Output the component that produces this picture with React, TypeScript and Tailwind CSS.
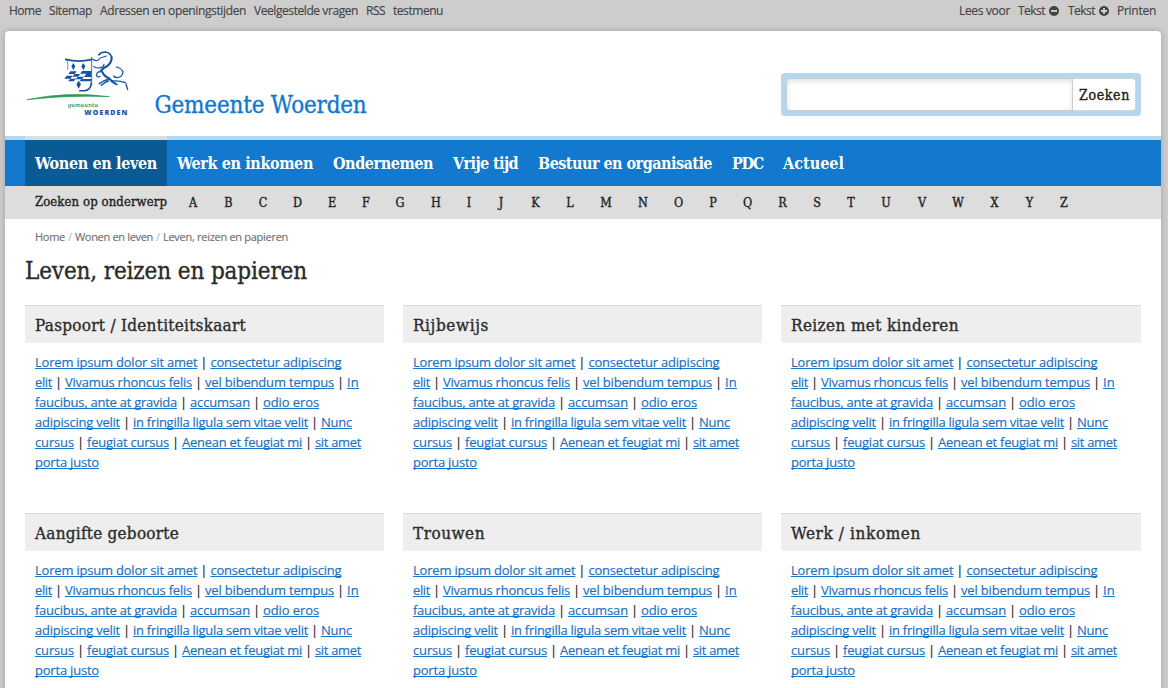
import { useLayoutEffect, useRef, useState } from "react";

const SLAB = "font-['DejaVu_Serif_Condensed','DejaVu_Serif',serif] [font-stretch:condensed] [-webkit-text-stroke:0.35px_currentColor]";
const SANS = "font-['Open_Sans','Noto_Sans',sans-serif] [-webkit-text-stroke:0.15px_currentColor]";

/** Text whose letter spacing is adjusted so that it fills a set width. */
function Fit({ text, w, className = "" }: { text: string; w: number; className?: string }) {
  const ref = useRef<HTMLSpanElement>(null);
  const [spacing, setSpacing] = useState(0);
  useLayoutEffect(() => {
    const natural = ref.current!.getBoundingClientRect().width;
    setSpacing((s) => s + (w - natural) / text.length);
  }, [text, w]);
  return (
    <span className="block shrink-0 whitespace-nowrap" style={{ width: w }}>
      <span ref={ref} className={className} style={{ letterSpacing: spacing }}>
        {text}
      </span>
    </span>
  );
}

const topLeft: [string, number][] = [
  ["Home", 32],
  ["Sitemap", 43],
  ["Adressen en openingstijden", 146],
  ["Veelgestelde vragen", 104],
  ["RSS", 19],
  ["testmenu", 50],
];

const nav: [string, number][] = [
  ["Wonen en leven", 122],
  ["Werk en inkomen", 136],
  ["Ondernemen", 100],
  ["Vrije tijd", 65],
  ["Bestuur en organisatie", 174],
  ["PDC", 31],
  ["Actueel", 61],
];

const letters: [string, number][] = [
  ["A", 193], ["B", 228.5], ["C", 263], ["D", 297.5], ["E", 332], ["F", 366], ["G", 400],
  ["H", 436], ["I", 469], ["J", 501], ["K", 535.5], ["L", 570], ["M", 606], ["N", 643],
  ["O", 678.5], ["P", 713], ["Q", 747.5], ["R", 782.5], ["S", 817], ["T", 851], ["U", 886],
  ["V", 922], ["W", 958], ["X", 994.5], ["Y", 1029.5], ["Z", 1064],
];

const lines: [string, number][][] = [
  [["Lorem ipsum dolor sit amet", 162.4], ["consectetur adipiscing", 131]],
  [["elit", 17], ["Vivamus rhoncus felis", 127], ["vel bibendum tempus", 129], ["In", 12]],
  [["faucibus, ante at gravida", 142], ["accumsan", 60], ["odio eros", 56]],
  [["adipiscing velit", 85], ["in fringilla ligula sem vitae velit", 175], ["Nunc", 31]],
  [["cursus", 39], ["feugiat cursus", 82], ["Aenean et feugiat mi", 120], ["sit amet", 46]],
  [["porta justo", 64]],
];

const sections: [string, number][] = [
  ["Paspoort / Identiteitskaart", 211],
  ["Rijbewijs", 76],
  ["Reizen met kinderen", 168],
  ["Aangifte geboorte", 144],
  ["Trouwen", 72],
  ["Werk / inkomen", 130],
];

function Logo() {
  return (
    <svg viewBox="0 0 360 255" className="h-[85px] w-[120px] shrink-0" fill="none">
      <g stroke="#1553a5" strokeLinecap="round" strokeLinejoin="round">
        <path d="M137 58 Q175 68 213 59" strokeWidth="5" />
        <path d="M141 60 Q146 72 143 88" strokeWidth="2" />
        <path d="M215 52 V136" strokeWidth="2.5" />
        <path d="M214 128 Q212 152 193 152 H179" strokeWidth="4.5" />
        <path d="M217 57 Q226 65 235 60 Q240 52 250 51 L259 48" strokeWidth="3.5" />
        <path d="M236 45 Q243 36 256 36 Q273 38 275 54" strokeWidth="4.5" />
        <path d="M275 52 Q275 68 262 78 Q246 86 242 94" strokeWidth="6.5" />
        <path d="M221 79 Q228 86 240 83 Q251 81 252 73" strokeWidth="3.5" />
        <path d="M241 95 Q231 95 229 105 Q231 112 240 110" strokeWidth="3.5" />
        <path d="M247 96 Q253 110 268 115 Q276 128 290 133" strokeWidth="6" />
        <path d="M269 116 Q250 121 238 131 M265 123 Q252 128 244 136" strokeWidth="4.5" />
        <path d="M289 81 Q305 84 309 96 Q308 111 292 113 Q285 113 281 108" strokeWidth="3.8" />
        <path d="M277 123 Q298 121 316 128 M318 132 L323 149" strokeWidth="4" />
      </g>
      <g fill="#1553a5">
        <path d="M160 69 L166 79 L160 91 L154 79Z M190 69 L196 79 L190 91 L184 79Z M176 122 L183 133 L176 146 L169 133Z" />
        <path d="M151 94 H170 L164 102 H145Z M187 93 H214 V101 H180Z M164 102 H181 L174 110 H157Z M199 101 H214 V111 H192Z M140 107 H158 L151 116 H133Z M174 110 H192 L185 118 H166Z M151 116 H168 L161 124 H144Z M185 117 H214 V124 H178Z" />
      </g>
      <path d="M21 179 Q145 153 268 170 Q145 165 21 179Z" fill="#2b9b50" stroke="#2b9b50" strokeWidth="2" />
      <text x="143" y="200" fontSize="17" textLength="91" fill="#2b9b50" stroke="#2b9b50" strokeWidth=".4" fontFamily="DejaVu Serif, serif">gemeente</text>
      <text x="193" y="224" fontSize="21" textLength="129" fontWeight="800" fill="#1553a5" stroke="none" fontFamily="Open Sans, sans-serif">WOERDEN</text>
    </svg>
  );
}

function SizeIcon({ plus = false }: { plus?: boolean }) {
  return (
    <svg viewBox="0 0 10 10" className="mt-[6px] ml-[4px] size-[10px] shrink-0">
      <circle cx="5" cy="5" r="5" fill="#444" />
      <path d={plus ? "M2 5H8M5 2V8" : "M2 5H8"} stroke="#d4d4d4" strokeWidth="1.8" />
    </svg>
  );
}

export default function App() {
  return (
    <div className={`h-[688px] overflow-hidden bg-[#cdcdcd] pr-[7px] pl-[5px] text-[#333] ${SANS}`}>
      <div className="flex h-[31px] justify-between pr-[5px] pl-1 text-[12px] leading-[22px] text-[#444]">
        <div className="flex gap-2">
          {topLeft.map(([t, w]) => <Fit key={t} text={t} w={w} />)}
        </div>
        <div className="flex">
          <Fit text="Lees voor" w={51} />
          <div className="ml-2 flex"><Fit text="Tekst" w={27} /><SizeIcon /></div>
          <div className="ml-[9px] flex"><Fit text="Tekst" w={27} /><SizeIcon plus /></div>
          <div className="ml-2"><Fit text="Printen" w={39} /></div>
        </div>
      </div>

      <div className="h-[670px] rounded-t-[4px] bg-white shadow-[0_0_6px_rgba(0,0,0,0.22)]">
        <header className="flex h-[105px] pt-[9px] pr-5 pl-[15px]">
          <Logo />
          <div className={`mt-[47px] ml-[14.5px] text-[24px] leading-[36px] text-[#1279ce] ${SLAB}`}>
            <Fit text="Gemeente Woerden" w={212} />
          </div>
          <form className="mt-[33px] ml-auto flex h-[43px] w-[360px] rounded-[4px] bg-[#b2d7ef] p-[5px]">
            <input className="h-[33px] w-[287px] rounded-l-[4px] border border-[#ccc] bg-white shadow-[inset_0_2px_5px_rgba(0,0,0,0.13)] outline-none" />
            <button type="button" className={`flex h-[33px] w-[63px] items-center rounded-r-[4px] border border-l-0 border-[#d5d5d5] bg-white pt-[2px] pl-[6px] text-[14px] text-[#222] ${SLAB}`}>
              <Fit text="Zoeken" w={51} />
            </button>
          </form>
        </header>

        <nav className={`flex h-[50px] bg-[#1279ce] text-[16px] leading-[48px] font-bold text-white ${SLAB} [-webkit-text-stroke:0px]`}>
          <div className="w-5 border-t-4 border-[#b2d7ef]" />
          {nav.map(([t, w], i) => (
            <div key={t} className={i === 0 ? "h-[50px] border-t-4 border-[#ddd] bg-[#0a5a96] px-[10px]" : "h-[50px] border-t-4 border-[#b2d7ef] px-[10px]"}>
              <Fit text={t} w={w} />
            </div>
          ))}
          <div className="flex-1 border-t-4 border-[#b2d7ef]" />
        </nav>

        <div className={`flex h-[33px] bg-[#ddd] pl-[30px] text-[13px] leading-[32px] text-[#222] ${SLAB}`}>
          <Fit text="Zoeken op onderwerp" w={132} />
          {letters.map(([l, c], i) => (
            <span key={l} className="w-6 shrink-0 pt-px text-center text-[12.5px]" style={{ marginLeft: i ? c - letters[i - 1][1] - 24 : 14 }}>
              {l}
            </span>
          ))}
        </div>

        <div className="flex h-9 gap-[3px] pl-[30px] text-[11px] leading-[36px] text-[#707070]">
          <Fit text="Home" w={30} />
          <span className="w-[4px] text-[#bbb]">/</span>
          <Fit text="Wonen en leven" w={78} />
          <span className="w-[4px] text-[#bbb]">/</span>
          <Fit text="Leven, reizen en papieren" w={125} />
        </div>

        <h1 className={`h-[50px] pl-5 text-[24px] leading-[32px] text-[#2b2b2b] ${SLAB}`}>
          <Fit text="Leven, reizen en papieren" w={282} />
        </h1>

        <main className="grid grid-cols-[359px_359px_360px] gap-x-[19px] pl-5">
          {sections.map(([title, w]) => (
            <section key={title} className="h-[208px]">
              <h2 className={`h-[38px] border-t border-[#d9d9d9] bg-[#eee] pl-[10px] text-[17px] leading-[38px] text-[#2b2b2b] ${SLAB}`}>
                <Fit text={title} w={w} />
              </h2>
              <div className="mt-[9px] pl-[10px] text-[13px] leading-[20px]">
                {lines.map((items, n) => (
                  <div key={n} className="flex h-5">
                    {items.map(([t, iw], i) => (
                      <div key={t} className="flex">
                        {i > 0 && <span className="w-[13px] text-center text-[#222]">|</span>}
                        <Fit text={t} w={iw} className="text-[#1a6fc0] underline decoration-[#1279ce] decoration-1 underline-offset-[1px] [text-decoration-skip-ink:none]" />
                      </div>
                    ))}
                  </div>
                ))}
              </div>
            </section>
          ))}
        </main>
      </div>
    </div>
  );
}
